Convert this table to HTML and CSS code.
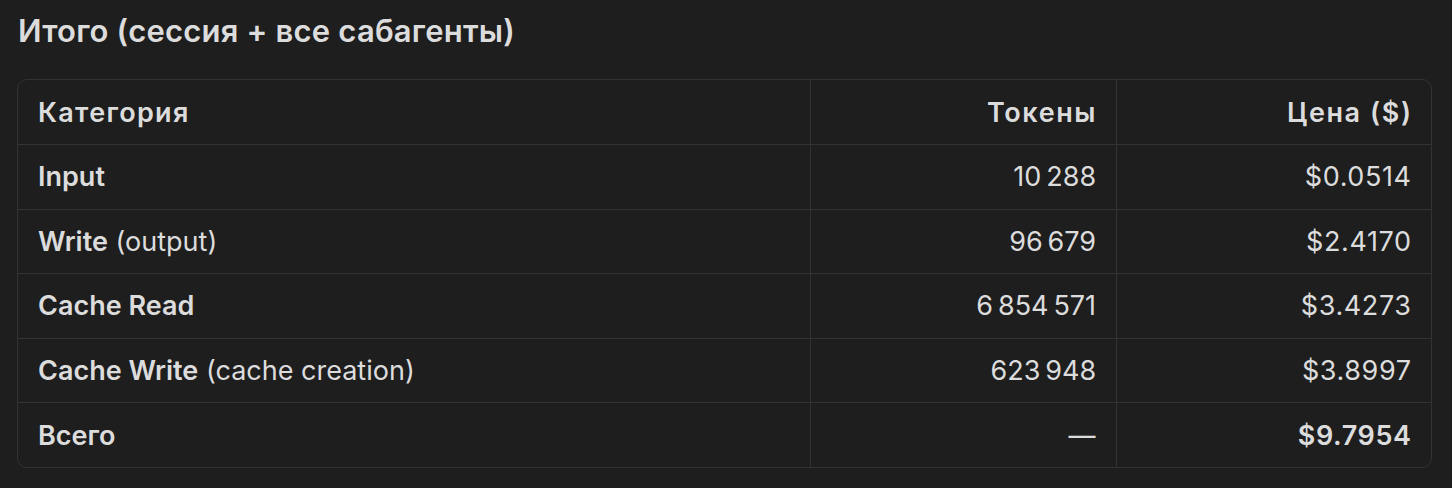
FILE: index.html
```html
<!DOCTYPE html>
<html lang="ru">
<head>
<meta charset="utf-8">
<link rel="stylesheet" href="styles.css">
</head>
<body>
<h3 class="title">Итого (сессия + все сабагенты)</h3>
<div class="table-wrap">
<table class="tbl">
<thead>
<tr><th class="c1">Категория</th><th class="num">Токены</th><th class="num">Цена ($)</th></tr>
</thead>
<tbody>
<tr><td><b>Input</b></td><td class="num">10&#8239;288</td><td class="num">$0.0514</td></tr>
<tr><td><b>Write</b> (output)</td><td class="num">96&#8239;679</td><td class="num">$2.4170</td></tr>
<tr><td><b>Cache Read</b></td><td class="num">6&#8239;854&#8239;571</td><td class="num">$3.4273</td></tr>
<tr><td><b>Cache Write</b> (cache creation)</td><td class="num">623&#8239;948</td><td class="num">$3.8997</td></tr>
<tr><td><b>Всего</b></td><td class="num">—</td><td class="num"><b>$9.7954</b></td></tr>
</tbody>
</table>
</div>
</body>
</html>
```
FILE: styles.css
```css
html, body {
  margin: 0;
  background: #1e1e1e;
  color: #dcdcdc;
  font-family: Inter, "Noto Sans", sans-serif;
}
body {
  padding: 12px 20px 0 17px;
}
.title {
  margin: 0 0 0 1px;
  font-size: 31px;
  font-weight: 600;
  line-height: 38px;
  letter-spacing: 0.2px;
}
.table-wrap {
  margin-top: 29px;
  border: 1px solid #333;
  border-radius: 10px;
  overflow: hidden;
  width: 1413px;
}
.tbl {
  width: 100%;
  border-collapse: collapse;
  font-size: 27px;
}
.tbl th, .tbl td {
  height: 64.5px;
  padding: 0 20px;
  text-align: left;
  border-right: 1px solid #333;
  border-bottom: 1px solid #333;
  box-sizing: border-box;
}
.tbl th {
  font-weight: 600;
  letter-spacing: 1.3px;
}
.tbl b {
  font-weight: 600;
}
.tbl tr > :last-child { border-right: none; }
.tbl tbody tr:last-child td { border-bottom: none; }
.tbl .c1 { width: 792px; }
.tbl td.num { text-align: right; letter-spacing: 0.6px; padding-right: 19.4px; }
.tbl th.num { text-align: right; letter-spacing: 1.6px; padding-right: 18.4px; }
.tbl th.num:nth-child(2) { width: 306px; }
```
